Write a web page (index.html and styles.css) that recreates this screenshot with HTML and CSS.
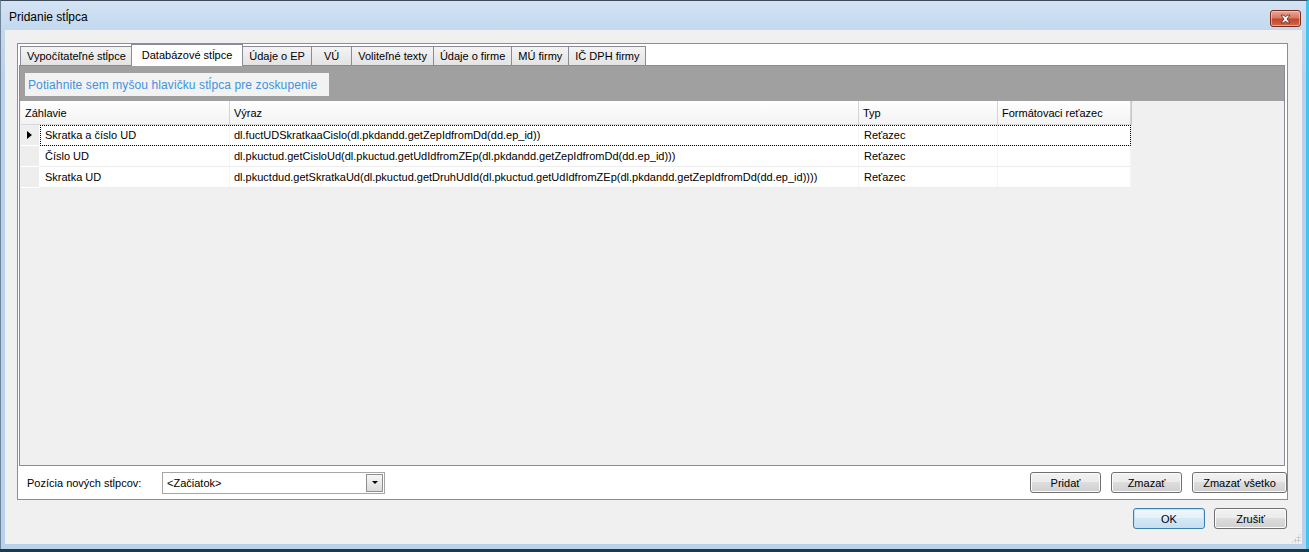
FILE: index.html
```html
<!DOCTYPE html>
<html lang="sk">
<head>
<meta charset="utf-8">
<title>Pridanie stĺpca</title>
<link rel="stylesheet" href="styles.css">
</head>
<body>
<div class="window">
  <div class="titlebar">
    <span class="title">Pridanie stĺpca</span>
    <div class="close">
      <svg width="30" height="16" viewBox="0 0 30 16">
        <path d="M10.5 4 L13.5 4 L15 6 L16.5 4 L19.5 4 L16.6 8 L19.5 12 L16.5 12 L15 10 L13.5 12 L10.5 12 L13.4 8 Z" fill="#ffffff" stroke="#5a1a10" stroke-width="0.8" stroke-linejoin="round"/>
      </svg>
    </div>
  </div>
  <div class="client">
    <div class="tabbox">
      <div class="tabs">
        <div class="tab">Vypočítateľné stĺpce</div>
        <div class="tab active">Databázové stĺpce</div>
        <div class="tab">Údaje o EP</div>
        <div class="tab tab-vu">VÚ</div>
        <div class="tab">Voliteľné texty</div>
        <div class="tab">Údaje o firme</div>
        <div class="tab">MÚ firmy</div>
        <div class="tab">IČ DPH firmy</div>
      </div>
      <div class="page">
        <div class="groupband">
          <div class="grouphint">Potiahnite sem myšou hlavičku stĺpca pre zoskupenie</div>
        </div>
        <div class="grid">
          <div class="grid-header">
            <div class="hcell c-head">Záhlavie</div>
            <div class="hcell c-expr">Výraz</div>
            <div class="hcell c-type">Typ</div>
            <div class="hcell c-fmt last">Formátovaci reťazec</div>
          </div>
          <div class="grid-row">
            <div class="indicator"><span class="arrow"></span></div>
            <div class="cells focused">
              <div class="cell c-name">Skratka a číslo UD</div>
              <div class="cell c-expr">dl.fuctUDSkratkaaCislo(dl.pkdandd.getZepIdfromDd(dd.ep_id))</div>
              <div class="cell c-type">Reťazec</div>
              <div class="cell c-fmt"></div>
            </div>
          </div>
          <div class="grid-row">
            <div class="indicator"></div>
            <div class="cells">
              <div class="cell c-name">Číslo UD</div>
              <div class="cell c-expr">dl.pkuctud.getCisloUd(dl.pkuctud.getUdIdfromZEp(dl.pkdandd.getZepIdfromDd(dd.ep_id)))</div>
              <div class="cell c-type">Reťazec</div>
              <div class="cell c-fmt"></div>
            </div>
          </div>
          <div class="grid-row">
            <div class="indicator"></div>
            <div class="cells">
              <div class="cell c-name">Skratka UD</div>
              <div class="cell c-expr">dl.pkuctdud.getSkratkaUd(dl.pkuctud.getDruhUdId(dl.pkuctud.getUdIdfromZEp(dl.pkdandd.getZepIdfromDd(dd.ep_id))))</div>
              <div class="cell c-type">Reťazec</div>
              <div class="cell c-fmt"></div>
            </div>
          </div>
        </div>
      </div>
      <div class="bottombar">
        <span class="pos-label">Pozícia nových stĺpcov:</span>
        <div class="combo">
          <span class="combo-text">&lt;Začiatok&gt;</span>
          <span class="combo-btn"><span class="combo-arrow"></span></span>
        </div>
        <div class="spacer"></div>
        <button class="btn btn-add">Pridať</button>
        <button class="btn btn-del">Zmazať</button>
        <button class="btn btn-delall">Zmazať všetko</button>
      </div>
    </div>
    <div class="dialog-buttons">
      <button class="btn btn-ok">OK</button>
      <button class="btn btn-cancel">Zrušiť</button>
    </div>
    <div class="grip"></div>
  </div>
</div>
</body>
</html>
```
FILE: styles.css
```css
* { box-sizing: border-box; }
html, body { margin: 0; padding: 0; }
body {
  width: 1309px;
  height: 552px;
  overflow: hidden;
  background: #1b3a4c;
  font-family: "Liberation Sans", Arial, sans-serif;
  font-size: 11px;
  color: #000;
}
.window {
  width: 1309px;
  height: 549px;
  display: flex;
  flex-direction: column;
  border-top: 1px solid #3b4b5b;
  border-left: 1px solid #6f8498;
  border-right: 3px solid #45c3ee;
  padding: 0 4px 5px 4px;
  background: linear-gradient(#d3e3f4 0px, #c3d8ee 30px, #b9d1ea 80px, #b9d1ea 100%);
}
.titlebar {
  height: 29px;
  flex: none;
  display: flex;
  align-items: center;
  justify-content: space-between;
  padding-left: 4px;
}
.title {
  font-size: 12px;
  color: #000;
  margin-top: 2px;
}
.close {
  width: 31px;
  height: 17px;
  margin-right: 1px;
  margin-top: 6px;
  border: 1px solid #7a2a1c;
  border-radius: 3px;
  background: linear-gradient(#e6a999 0%, #d97a63 45%, #c5452b 55%, #cf6a4c 100%);
  box-shadow: inset 0 0 0 1px rgba(255,220,210,0.55);
  display: flex;
  align-items: center;
  justify-content: center;
}
.close svg { display: block; }
.client {
  flex: 1;
  background: #f0f0f0;
  display: flex;
  flex-direction: column;
  padding: 13px 14px 0 12px;
  position: relative;
}
.tabbox {
  height: 457px;
  flex: none;
  border: 1px solid #8c8e94;
  background: #ffffff;
  display: flex;
  flex-direction: column;
}
.tabs {
  height: 21px;
  flex: none;
  display: flex;
  align-items: flex-end;
  padding-left: 2px;
  position: relative;
  z-index: 2;
}
.tab {
  height: 19px;
  padding: 0 6px;
  margin-right: -1px;
  border: 1px solid #898c95;
  border-bottom: none;
  background: linear-gradient(#f4f4f4, #e3e3e3);
  display: flex;
  align-items: center;
  white-space: nowrap;
  color: #000;
}
.tab-vu { padding: 0 12px; }
.tab.active {
  height: 22px;
  margin: 0 -1px -1px -1px;
  padding: 0 10px 2px 10px;
  background: #ffffff;
  position: relative;
  z-index: 3;
}
.page {
  height: 401px;
  flex: none;
  margin: 0 2px 0 1px;
  border: 1px solid #898c95;
  display: flex;
  flex-direction: column;
  background: #f0f0f0;
  box-shadow: inset 2px 0 0 #a0a0a0;
}
.groupband {
  height: 35px;
  flex: none;
  background: #a0a0a0;
  padding: 7px 0 0 5px;
}
.grouphint {
  width: 304px;
  height: 23px;
  background: #f2f2f2;
  color: #3e93de;
  font-size: 12px;
  letter-spacing: 0.1px;
  display: flex;
  align-items: center;
  padding-left: 3px;
  white-space: nowrap;
}
.grid {
  flex: 1;
  background: #f0f0f0;
  display: flex;
  flex-direction: column;
  padding-left: 1px;
}
.grid-header {
  height: 24px;
  flex: none;
  display: flex;
}
.hcell {
  height: 24px;
  background: linear-gradient(#ffffff, #f2f2f2);
  border-right: 1px solid #d5d5d5;
  border-bottom: 1px solid #d9d9d9;
  display: flex;
  align-items: center;
  padding-left: 4px;
  white-space: nowrap;
}
.hcell.last { box-shadow: 1px 0 0 #c8c8c8; }
.c-head { width: 209px; padding-left: 4px; }
.c-name { width: 190px; }
.c-expr { width: 629px; }
.c-type { width: 139px; }
.c-fmt { width: 133px; }
.grid-row {
  height: 21px;
  flex: none;
  display: flex;
}
.indicator {
  width: 19px;
  height: 21px;
  background: #eeeeee;
  border-right: 1px solid #ffffff;
  border-bottom: 1px solid #ffffff;
  display: flex;
  align-items: center;
  padding-left: 6px;
}
.arrow {
  width: 0;
  height: 0;
  border-top: 4px solid transparent;
  border-bottom: 4px solid transparent;
  border-left: 5px solid #000;
}
.cells {
  display: flex;
  height: 21px;
  background: #ffffff;
}
.cells.focused { outline: 1px dotted #000; outline-offset: -1px; }
.cell {
  height: 21px;
  border-right: 1px solid #f4f4f4;
  border-bottom: 1px solid #ececec;
  display: flex;
  align-items: center;
  padding-left: 5px;
  white-space: nowrap;
  overflow: hidden;
}
.cell.c-expr { padding-left: 4px; }
.cell.c-type { padding-left: 5px; }
.bottombar {
  flex: 1;
  display: flex;
  align-items: center;
  padding: 0 0 0 9px;
  background: #ffffff;
}
.pos-label {
  width: 135px;
  flex: none;
  white-space: nowrap;
}
.combo {
  width: 223px;
  height: 22px;
  flex: none;
  border: 1px solid #a6a6a6;
  background: #ffffff;
  display: flex;
  align-items: center;
  justify-content: space-between;
  padding: 0 1px 0 4px;
}
.combo-btn {
  width: 17px;
  height: 18px;
  border: 1px solid #8f8f8f;
  background: linear-gradient(#f6f6f6, #dcdcdc);
  display: flex;
  align-items: center;
  justify-content: center;
}
.combo-arrow {
  width: 0;
  height: 0;
  border-left: 3px solid transparent;
  border-right: 3px solid transparent;
  border-top: 3px solid #000;
}
.spacer { flex: 1; }
.btn {
  height: 21px;
  font-family: "Liberation Sans", Arial, sans-serif;
  font-size: 11px;
  font-weight: normal;
  color: #000;
  border: 1px solid #707070;
  border-radius: 3px;
  background: linear-gradient(#f2f2f2 0%, #ebebeb 50%, #dddddd 50%, #cfcfcf 100%);
  box-shadow: inset 0 0 0 1px #fbfbfb;
  padding: 0;
  flex: none;
}
.btn-add { width: 71px; margin-right: 10px; }
.btn-del { width: 71px; margin-right: 10px; }
.btn-delall { width: 95px; margin-right: 0; }
.dialog-buttons {
  display: flex;
  justify-content: flex-end;
  margin-top: 8px;
  margin-right: 1px;
}
.btn-ok {
  width: 72px;
  margin-right: 9px;
  border-color: #3c7fb1;
  background: linear-gradient(#eef7fc 0%, #e4f1f9 50%, #d4e8f4 50%, #c6def0 100%);
  box-shadow: inset 0 0 0 1px #bfe4f8;
}
.btn-cancel { width: 73px; }
.grip {
  position: absolute;
  right: 1px;
  bottom: 1px;
  width: 10px;
  height: 10px;
  background:
    radial-gradient(circle, #b8b8b8 0.8px, transparent 1.2px) 0 0 / 3px 3px;
  clip-path: polygon(100% 0, 100% 100%, 0 100%);
}
```
